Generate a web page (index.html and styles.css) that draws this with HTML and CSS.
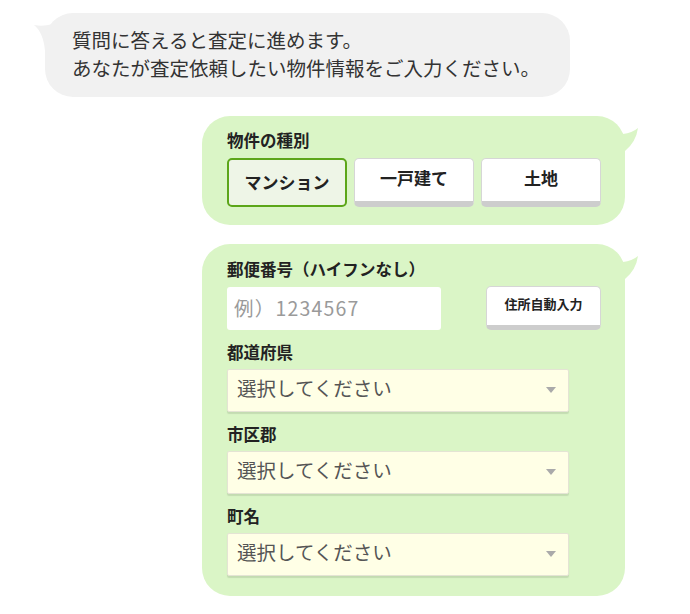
FILE: index.html
```html
<!DOCTYPE html>
<html lang="ja">
<head>
<meta charset="utf-8">
<title>査定フォーム</title>
<link rel="stylesheet" href="styles.css">
</head>
<body>
<div class="chat">
  <div class="msg msg-bot">
    <svg class="tail tail-left" width="24" height="30" viewBox="0 0 24 30"><path d="M2,3 C8,4 14,4 20,2 L24,2 L24,29 L13,29 C12,16 8,8 2,3 Z" fill="#f1f1f1"/></svg>
    <p class="msg-text">質問に答えると査定に進めます。<br>あなたが査定依頼したい物件情報をご入力ください。</p>
  </div>

  <div class="msg msg-user">
    <svg class="tail tail-right" width="24" height="30" viewBox="0 0 24 30"><path d="M5,10 Q14,9 20,4 Q18,18 7,27 L0,27 L0,10 Z" fill="#daf5c6"/></svg>
    <div class="label">物件の種別</div>
    <div class="choices">
      <button class="choice is-selected">マンション</button>
      <button class="choice">一戸建て</button>
      <button class="choice">土地</button>
    </div>
  </div>

  <div class="msg msg-user msg-form">
    <svg class="tail tail-right" width="24" height="30" viewBox="0 0 24 30"><path d="M5,10 Q14,9 20,4 Q18,18 7,27 L0,27 L0,10 Z" fill="#daf5c6"/></svg>
    <div class="label">郵便番号（ハイフンなし）</div>
    <div class="zip-row">
      <input class="zip-input" type="text" placeholder="例）1234567">
      <button class="zip-btn">住所自動入力</button>
    </div>
    <div class="label label-gap">都道府県</div>
    <div class="select">選択してください</div>
    <div class="label label-gap">市区郡</div>
    <div class="select">選択してください</div>
    <div class="label label-gap">町名</div>
    <div class="select">選択してください</div>
  </div>
</div>
</body>
</html>
```
FILE: styles.css
```css
html, body {
  margin: 0;
  padding: 0;
  background: #ffffff;
}
body {
  font-family: "Noto Sans CJK JP", "Noto Sans", sans-serif;
  color: #333333;
}
.chat {
  display: flex;
  flex-direction: column;
  padding-top: 13px;
}
.msg {
  position: relative;
  box-sizing: border-box;
  border-radius: 28px;
}
.tail {
  position: absolute;
  display: block;
}
.msg-bot {
  margin-left: 45px;
  width: 525px;
  height: 84px;
  background: #f1f1f1;
  padding: 13px 0 0 27px;
}
.tail-left {
  left: -13px;
  top: 9px;
}
.msg-text {
  margin: 0;
  font-size: 19.5px;
  line-height: 28px;
  color: #333333;
  letter-spacing: 0;
  white-space: nowrap;
}
.msg-user {
  margin-left: 202px;
  width: 423px;
  background: #daf5c6;
  padding: 12px 24px 18px 25px;
  margin-top: 19px;
}
.msg-form {
  padding: 13px 24px 20px 25px;
}
.tail-right {
  left: 416px;
  top: 8px;
}
.label {
  font-size: 16.5px;
  line-height: 24px;
  font-weight: bold;
  color: #222222;
  white-space: nowrap;
}
.label-gap {
  margin-top: 10px;
}
.choices {
  display: flex;
  gap: 7px;
  margin-top: 6px;
}
.choice {
  box-sizing: border-box;
  width: 120px;
  height: 49px;
  margin: 0;
  padding: 0 0 6px;
  font-family: "Noto Sans CJK JP", "Noto Sans", sans-serif;
  font-size: 17px;
  font-weight: bold;
  color: #222222;
  background: #ffffff;
  border: 1px solid #d6d6d6;
  border-bottom: 6px solid #cdcdcd;
  border-radius: 5px;
}
.choice.is-selected {
  background: #eef5e7;
  border: 2px solid #5ca619;
  padding: 0 0 3px;
}
.zip-row {
  display: flex;
  justify-content: space-between;
  align-items: flex-start;
  width: 374px;
  margin-top: 6px;
}
.zip-input {
  box-sizing: border-box;
  width: 214px;
  height: 43px;
  margin: 0;
  padding: 0 7px 3px;
  border: none;
  border-radius: 3px;
  background: #ffffff;
  font-family: "Noto Sans CJK JP", "Noto Sans", sans-serif;
  font-size: 19.5px;
  letter-spacing: 1.2px;
  color: #333333;
  outline: none;
}
.zip-input::placeholder {
  color: #9a9a9a;
}
.zip-btn {
  box-sizing: border-box;
  width: 115px;
  height: 44px;
  padding: 0 0 5px;
  font-family: "Noto Sans CJK JP", "Noto Sans", sans-serif;
  font-size: 13px;
  font-weight: bold;
  color: #222222;
  background: #ffffff;
  border: 1px solid #d6d6d6;
  border-bottom: 5px solid #cdcdcd;
  border-radius: 5px;
  margin: -1px 0 0;
}
.select {
  position: relative;
  box-sizing: border-box;
  width: 342px;
  height: 43px;
  margin-top: 5px;
  padding: 0 0 0 9px;
  background: #ffffe6;
  border: 1px solid #e4e4d4;
  border-radius: 2px;
  box-shadow: 0 2px 1px rgba(0, 0, 0, 0.1);
  font-size: 19.5px;
  line-height: 35px;
  color: #555555;
  white-space: nowrap;
}
.select::after {
  content: "";
  position: absolute;
  right: 12px;
  top: 17px;
  width: 0;
  height: 0;
  border-left: 5px solid transparent;
  border-right: 5px solid transparent;
  border-top: 6px solid #aaaaaa;
}
```
